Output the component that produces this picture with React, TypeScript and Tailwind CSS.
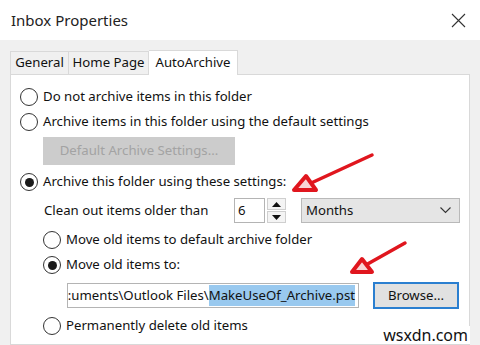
import React from "react";

function Radio({ checked }: { checked?: boolean }) {
  return (
    <span className="w-[18px] h-[18px] rounded-full border border-[#333] bg-white flex items-center justify-center shrink-0">
      {checked && <span className="w-[9px] h-[9px] rounded-full bg-[#1a1a1a]"></span>}
    </span>
  );
}

function RadioRow({ label, checked, className }: { label: string; checked?: boolean; className?: string }) {
  return (
    <div className={"h-[20px] flex items-center gap-[5px] whitespace-nowrap " + (className || "")}>
      <Radio checked={checked} />
      <span>{label}</span>
    </div>
  );
}

export default function App() {
  return (
    <div
      className="w-[480px] h-[345px] overflow-hidden bg-[#f0f0f0] relative flex flex-col text-[13.2px] text-[#111]"
      style={{ fontFamily: '"Noto Sans", "Open Sans", sans-serif' }}
    >
      {/* title bar */}
      <div className="h-[40px] bg-white flex items-center justify-between pl-[11px] pr-[14px] shrink-0">
        <span className="text-[15px] text-[#222]">Inbox Properties</span>
        <svg width="15" height="15" viewBox="0 0 15 15">
          <path d="M1 1L14 14M14 1L1 14" stroke="#333" strokeWidth="1.1" />
        </svg>
      </div>

      {/* tabs */}
      <div className="pl-[10px] pt-[10px] flex items-end shrink-0 whitespace-nowrap">
        <div className="h-[23px] w-[59px] border border-[#d9d9d9] border-b-0 flex items-center justify-center">General</div>
        <div className="h-[23px] w-[80px] border border-[#d9d9d9] border-l-0 border-b-0 flex items-center justify-center">Home Page</div>
        <div className="h-[25px] w-[89px] border border-[#d9d9d9] border-l-0 border-b-0 bg-white -mb-px relative z-10 flex items-center justify-center">
          AutoArchive
        </div>
      </div>

      {/* panel */}
      <div className="mx-[10px] flex-1 bg-white border border-[#d9d9d9] pl-[9px] pt-[12px] flex flex-col">
        <RadioRow label="Do not archive items in this folder" />
        <RadioRow label="Archive items in this folder using the default settings" className="mt-[5px]" />
        <div className="mt-[5px] ml-[23px] w-[192px] h-[28px] bg-[#cccccc] text-[#a3a3a3] flex items-center justify-center">
          Default Archive Settings...
        </div>
        <RadioRow label="Archive this folder using these settings:" checked className="mt-[7px]" />

        <div className="mt-[6px] h-[25px] flex items-center pl-[24px]">
          <span className="w-[190px]">Clean out items older than</span>
          <div className="w-[31px] h-[25px] border border-[#b4b4b4] flex items-center pl-[3px]">6</div>
          <div className="ml-[2px] w-[19px] h-[25px] flex flex-col gap-px">
            <div className="flex-1 border border-[#cfcfcf] bg-[#f4f4f4] flex items-center justify-center">
              <svg width="9" height="5" viewBox="0 0 9 5"><path d="M4.5 0L9 5H0Z" fill="#111" /></svg>
            </div>
            <div className="flex-1 border border-[#cfcfcf] bg-[#f4f4f4] flex items-center justify-center">
              <svg width="9" height="5" viewBox="0 0 9 5"><path d="M0 0H9L4.5 5Z" fill="#111" /></svg>
            </div>
          </div>
          <div className="ml-[15px] w-[159px] h-[25px] border border-[#b9b9b9] bg-[#e5e5e5] flex items-center justify-between pl-[4px] pr-[8px]">
            <span>Months</span>
            <svg width="11" height="7" viewBox="0 0 11 7"><path d="M0.5 0.5L5.5 5.5L10.5 0.5" stroke="#333" strokeWidth="1.1" fill="none" /></svg>
          </div>
        </div>

        <div className="pl-[23px] flex flex-col">
          <RadioRow label="Move old items to default archive folder" className="mt-[7px]" />
          <RadioRow label="Move old items to:" checked className="mt-[5px]" />
          <div className="mt-[7px] h-[27px] flex items-center pl-[24px]">
            <div className="w-[292px] h-[25px] border border-[#b4b4b4] flex items-center justify-end overflow-hidden whitespace-nowrap pr-[3px]">
              <span>:uments\Outlook Files\</span>
              <span className="bg-[#99c9ef] h-[21px] flex items-center">MakeUseOf_Archive.pst</span>
            </div>
            <div className="ml-[14px] w-[86px] h-[27px] border-2 border-[#2b7fd0] bg-[#e1e1e1] flex items-center justify-center">
              Browse...
            </div>
          </div>
          <RadioRow label="Permanently delete old items" className="mt-[7px]" />
        </div>
      </div>

      {/* annotation arrows */}
      <svg className="absolute left-0 top-0 pointer-events-none" width="480" height="345">
        <path d="M372 155L309 184" stroke="#e0161e" strokeWidth="3.5" strokeLinecap="round" />
        <polygon points="294,190 306,176 316,190" fill="#f8d5d5" stroke="#e0161e" strokeWidth="4" strokeLinejoin="round" />
        <path d="M405 243L364 266" stroke="#e0161e" strokeWidth="3.5" strokeLinecap="round" />
        <polygon points="352,272 362,259 372,272" fill="#f8d5d5" stroke="#e0161e" strokeWidth="4" strokeLinejoin="round" />
      </svg>

      <div className="absolute right-[10px] top-[326px] bg-white px-[2px] text-[16px] leading-[18px] text-[#111]">wsxdn.com</div>
    </div>
  );
}
